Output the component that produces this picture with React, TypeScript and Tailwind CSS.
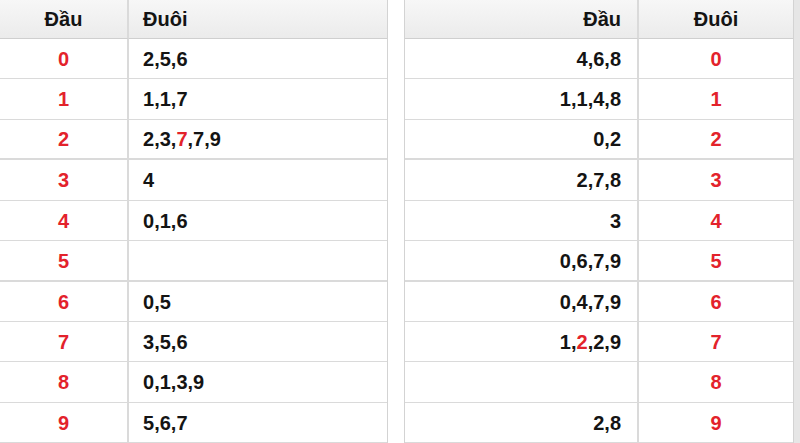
const rowHeights = [
    'h-[40px]', 'h-[41px]', 'h-[40px] border-b-2', 'h-[41px]', 'h-[40px]',
    'h-[41px] border-b-2', 'h-[40px]', 'h-[40px]', 'h-[41px]', 'h-[40px]'
]

type Nums = { vals: string[], red?: number }

const trai: Nums[] = [
    { vals: ['2', '5', '6'] },
    { vals: ['1', '1', '7'] },
    { vals: ['2', '3', '7', '7', '9'], red: 2 },
    { vals: ['4'] },
    { vals: ['0', '1', '6'] },
    { vals: [] },
    { vals: ['0', '5'] },
    { vals: ['3', '5', '6'] },
    { vals: ['0', '1', '3', '9'] },
    { vals: ['5', '6', '7'] },
]

const phai: Nums[] = [
    { vals: ['4', '6', '8'] },
    { vals: ['1', '1', '4', '8'] },
    { vals: ['0', '2'] },
    { vals: ['2', '7', '8'] },
    { vals: ['3'] },
    { vals: ['0', '6', '7', '9'] },
    { vals: ['0', '4', '7', '9'] },
    { vals: ['1', '2', '2', '9'], red: 1 },
    { vals: [] },
    { vals: ['2', '8'] },
]

const Lista = ({ item }: { item: Nums }) => (
    <>
        {item.vals.map((v, i) => (
            <span key={i}>
                {i > 0 && ','}
                <span className={i === item.red ? 'text-[#e3222b]' : ''}>{v}</span>
            </span>
        ))}
    </>
)

const Header = ({ children, className }: { children: React.ReactNode, className: string }) => (
    <div className={`h-[39px] flex items-center border-b border-[#cfcfcf] bg-gradient-to-b from-[#f7f7f7] to-[#ebebeb] ${className}`}>
        {children}
    </div>
)

export default function App() {
    return (
        <div className="w-[800px] h-[443px] bg-white flex overflow-hidden text-[20px] font-bold text-[#141414]" style={{ fontFamily: '"Liberation Sans", Arial, sans-serif' }}>
            {/* bang trai */}
            <div className="w-[388px] shrink-0 border-r border-[#d3d3d3]">
                <div className="grid grid-cols-[129px_1fr]">
                    <Header className="justify-center border-r-2 border-r-[#dadada]">Đầu</Header>
                    <Header className="pl-[14px]">Đuôi</Header>
                </div>
                {trai.map((item, i) => (
                    <div key={i} className={`grid grid-cols-[129px_1fr] border-b border-[#dadada] ${rowHeights[i]}`}>
                        <div className="flex items-center justify-center border-r-2 border-[#dadada] text-[#e3222b]">{i}</div>
                        <div className="flex items-center pl-[14px]"><Lista item={item} /></div>
                    </div>
                ))}
            </div>

            <div className="w-[16px] shrink-0" />

            {/* bang phai */}
            <div className="w-[390px] shrink-0 border-x border-[#d3d3d3]">
                <div className="grid grid-cols-[234px_1fr]">
                    <Header className="justify-end pr-[16px] border-r-2 border-r-[#dadada]">Đầu</Header>
                    <Header className="justify-center">Đuôi</Header>
                </div>
                {phai.map((item, i) => (
                    <div key={i} className={`grid grid-cols-[234px_1fr] border-b border-[#dadada] ${rowHeights[i]}`}>
                        <div className="flex items-center justify-end pr-[16px] border-r-2 border-[#dadada]"><Lista item={item} /></div>
                        <div className="flex items-center justify-center text-[#e3222b]">{i}</div>
                    </div>
                ))}
            </div>

            <div className="flex-1 bg-[#e6e6e6]" />
        </div>
    )
}
